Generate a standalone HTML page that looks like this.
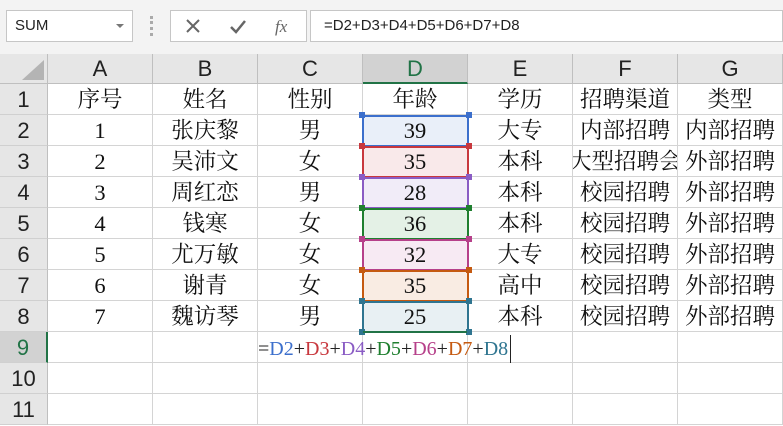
<!DOCTYPE html>
<html><head><meta charset="utf-8">
<style>
*{margin:0;padding:0;box-sizing:border-box}
body{width:783px;height:426px;overflow:hidden;background:#fff;position:relative;font-family:"Liberation Sans",sans-serif}
.a{position:absolute}
.tb{left:0;top:0;width:783px;height:54px;background:#f3f3f3}
.box{background:#fff;border:1px solid #c6c6c6}
.ch{top:54px;height:30px;background:#e6e6e6;border-right:1px solid #bfbfbf;border-bottom:1px solid #bfbfbf;text-align:center;font-size:22px;line-height:30px;color:#222}
.rh{left:0;width:48px;height:31px;background:#e6e6e6;border-right:1px solid #bfbfbf;border-bottom:1px solid #d0d0d0;text-align:center;font-size:22px;line-height:31px;color:#222}
.c{height:31px;border-right:1px solid #d4d4d4;border-bottom:1px solid #d4d4d4;text-align:center;font-family:"Liberation Serif","Noto Serif CJK SC",serif;font-size:22.5px;line-height:31px;white-space:nowrap;overflow:hidden;color:#111}
.db{border:2px solid}
.sq{width:6px;height:6px}
</style></head><body>
<div class="a tb"></div>
<div class="a box" style="left:6px;top:10px;width:127px;height:32px;font-size:15px;line-height:30px;padding-left:8px;color:#222">SUM<span class="a" style="right:8px;top:13px;border-left:4px solid transparent;border-right:4px solid transparent;border-top:4px solid #777"></span></div>
<div class="a" style="left:150px;top:16px;width:3px;height:20px;border-left:3px dotted #aaa"></div>
<div class="a box" style="left:170px;top:10px;width:137px;height:32px"></div>
<svg class="a" style="left:183px;top:17px" width="110" height="20"><path d="M4 3L16 15M16 3L4 15" stroke="#666" stroke-width="2"/><path d="M48 10l5 5l9-11" stroke="#666" stroke-width="2.5" fill="none"/><text x="92" y="15" font-family="Liberation Serif" font-style="italic" font-size="17" fill="#666">fx</text></svg>
<div class="a box" style="left:310px;top:10px;width:473px;height:32px;font-size:15px;line-height:30px;padding-left:13px;color:#222">=D2+D3+D4+D5+D6+D7+D8</div>
<div id="g"></div>
<script>
var g=document.getElementById('g'),h='';
var cx=[48,153,258,363,468,573,678,783];
h+='<div class="a" style="left:0;top:54px;width:48px;height:30px;background:#e6e6e6;border-right:1px solid #bfbfbf;border-bottom:1px solid #bfbfbf"></div>';
h+='<div class="a" style="left:22px;top:60px;width:0;height:0;border-left:22px solid transparent;border-bottom:20px solid #b4b4b4"></div>';
var L='ABCDEFG';
for(var i=0;i<7;i++){var s=i==3?'background:#d2d2d2;color:#217346;border-bottom:2px solid #217346;':'';h+='<div class="a ch" style="left:'+cx[i]+'px;width:105px;'+s+'">'+L[i]+'</div>';}
var d=[['序号','姓名','性别','年龄','学历','招聘渠道','类型'],['1','张庆黎','男','39','大专','内部招聘','内部招聘'],['2','吴沛文','女','35','本科','大型招聘会','外部招聘'],['3','周红恋','男','28','本科','校园招聘','外部招聘'],['4','钱寒','女','36','本科','校园招聘','外部招聘'],['5','尤万敏','女','32','大专','校园招聘','外部招聘'],['6','谢青','女','35','高中','校园招聘','外部招聘'],['7','魏访琴','男','25','本科','校园招聘','外部招聘'],['','','','','','',''],['','','','','','',''],['','','','','','','']];
var col=['#3c6fcc','#c8383e','#8a5cc4','#1f7f2f','#b6408a','#c55a11','#2f7590'];
var bg=['#e9eff9','#f9e9ea','#f1ecf8','#e4f1e6','#f7eaf3','#f9ece3','#e8f0f3'];
for(var r=0;r<11;r++){var y=84+r*31;
 var s=r==8?'background:#d2d2d2;color:#217346;border-right:2px solid #217346;':'';
 h+='<div class="a rh" style="top:'+y+'px;'+s+'">'+(r+1)+'</div>';
 for(var i=0;i<7;i++){var w=105,t=d[r][i];var b='';if(r>=1&&r<=7&&i==3)b='background:'+bg[r-1]+';';
  var st=(i==5&&r==2)?'text-align:left;':'';
  h+='<div class="a c" style="left:'+cx[i]+'px;top:'+y+'px;width:'+w+'px;'+b+st+'">'+(i==5&&r==2?'<span style="margin-left:-4px">'+t+'</span>':t)+'</div>';}
}
for(var k=0;k<7;k++){var y=115+k*31;
 h+='<div class="a db" style="left:362px;top:'+y+'px;width:107px;height:32px;border-color:'+col[k]+'"></div>';
 [[359,y-3],[466,y-3],[359,y+28],[466,y+28]].forEach(function(p){h+='<div class="a sq" style="left:'+p[0]+'px;top:'+p[1]+'px;background:'+col[k]+'"></div>';});
}
h+='<div class="a" style="left:363px;top:331px;width:104px;height:2px;background:#217346"></div>';
var f=['D2','D3','D4','D5','D6','D7','D8'],fs='<span style="color:#222">=</span>';
for(var k=0;k<7;k++){fs+=(k?'<span style="color:#222">+</span>':'')+'<span style="color:'+col[k]+'">'+f[k]+'</span>';}
h+='<div class="a" style="left:258px;top:335px;height:28px;font-family:\'Liberation Serif\',serif;font-size:20px;line-height:28px;white-space:nowrap;padding-right:2px;border-right:1px solid #222">'+fs+'</div>';
g.innerHTML=h;
</script>
</body></html>
